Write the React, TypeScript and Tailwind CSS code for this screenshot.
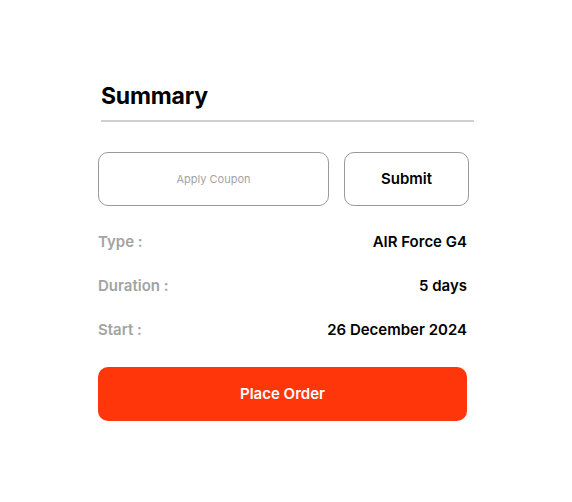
import React, { useState } from 'react';

const rows = [
   { label: 'Type :', value: 'AIR Force G4' },
   { label: 'Duration :', value: '5 days' },
   { label: 'Start :', value: '26 December 2024' },
];

const App = () => {
   const [coupon, setCoupon] = useState('');

   return (
      <div className="w-[572px] h-[502px] bg-white pt-[77px] font-['Inter',sans-serif]">
         {/* Heading */}
         <div className="ml-[101px] w-[373px]">
            <h1 className="text-[23px] leading-[38px] font-bold text-black tracking-[-0.2px]">Summary</h1>
            <div className="mt-[5px] h-[2px] bg-[#d0d0d0]" />
         </div>

         <div className="ml-[98px] w-[371px] mt-[30px]">
            {/* Coupon */}
            <div className="flex gap-[15px]">
               <input
                  type="text"
                  value={coupon}
                  onChange={(e) => setCoupon(e.target.value)}
                  placeholder="Apply Coupon"
                  className="w-[231px] h-[54px] rounded-[10px] border border-[#9a9a9a] text-center text-[11px] text-black placeholder:text-[#a3a3a3] focus:outline-none"
               />
               <button className="w-[125px] h-[54px] rounded-[10px] border border-[#9a9a9a] text-[15px] font-semibold text-black">
                  Submit
               </button>
            </div>

            {/* Details */}
            <div className="mt-[25px] w-[369px] flex flex-col gap-[22px]">
               {rows.map((row) => (
                  <div key={row.label} className="flex justify-between items-center h-[22px] text-[15px] font-semibold">
                     <span className="text-[#a3a3a3]">{row.label}</span>
                     <span className="text-black">{row.value}</span>
                  </div>
               ))}
            </div>

            {/* Place order */}
            <button className="mt-[26px] w-[369px] h-[54px] rounded-[10px] bg-[#ff360a] text-white text-[15px] font-semibold">
               Place Order
            </button>
         </div>
      </div>
   );
};

export default App;
